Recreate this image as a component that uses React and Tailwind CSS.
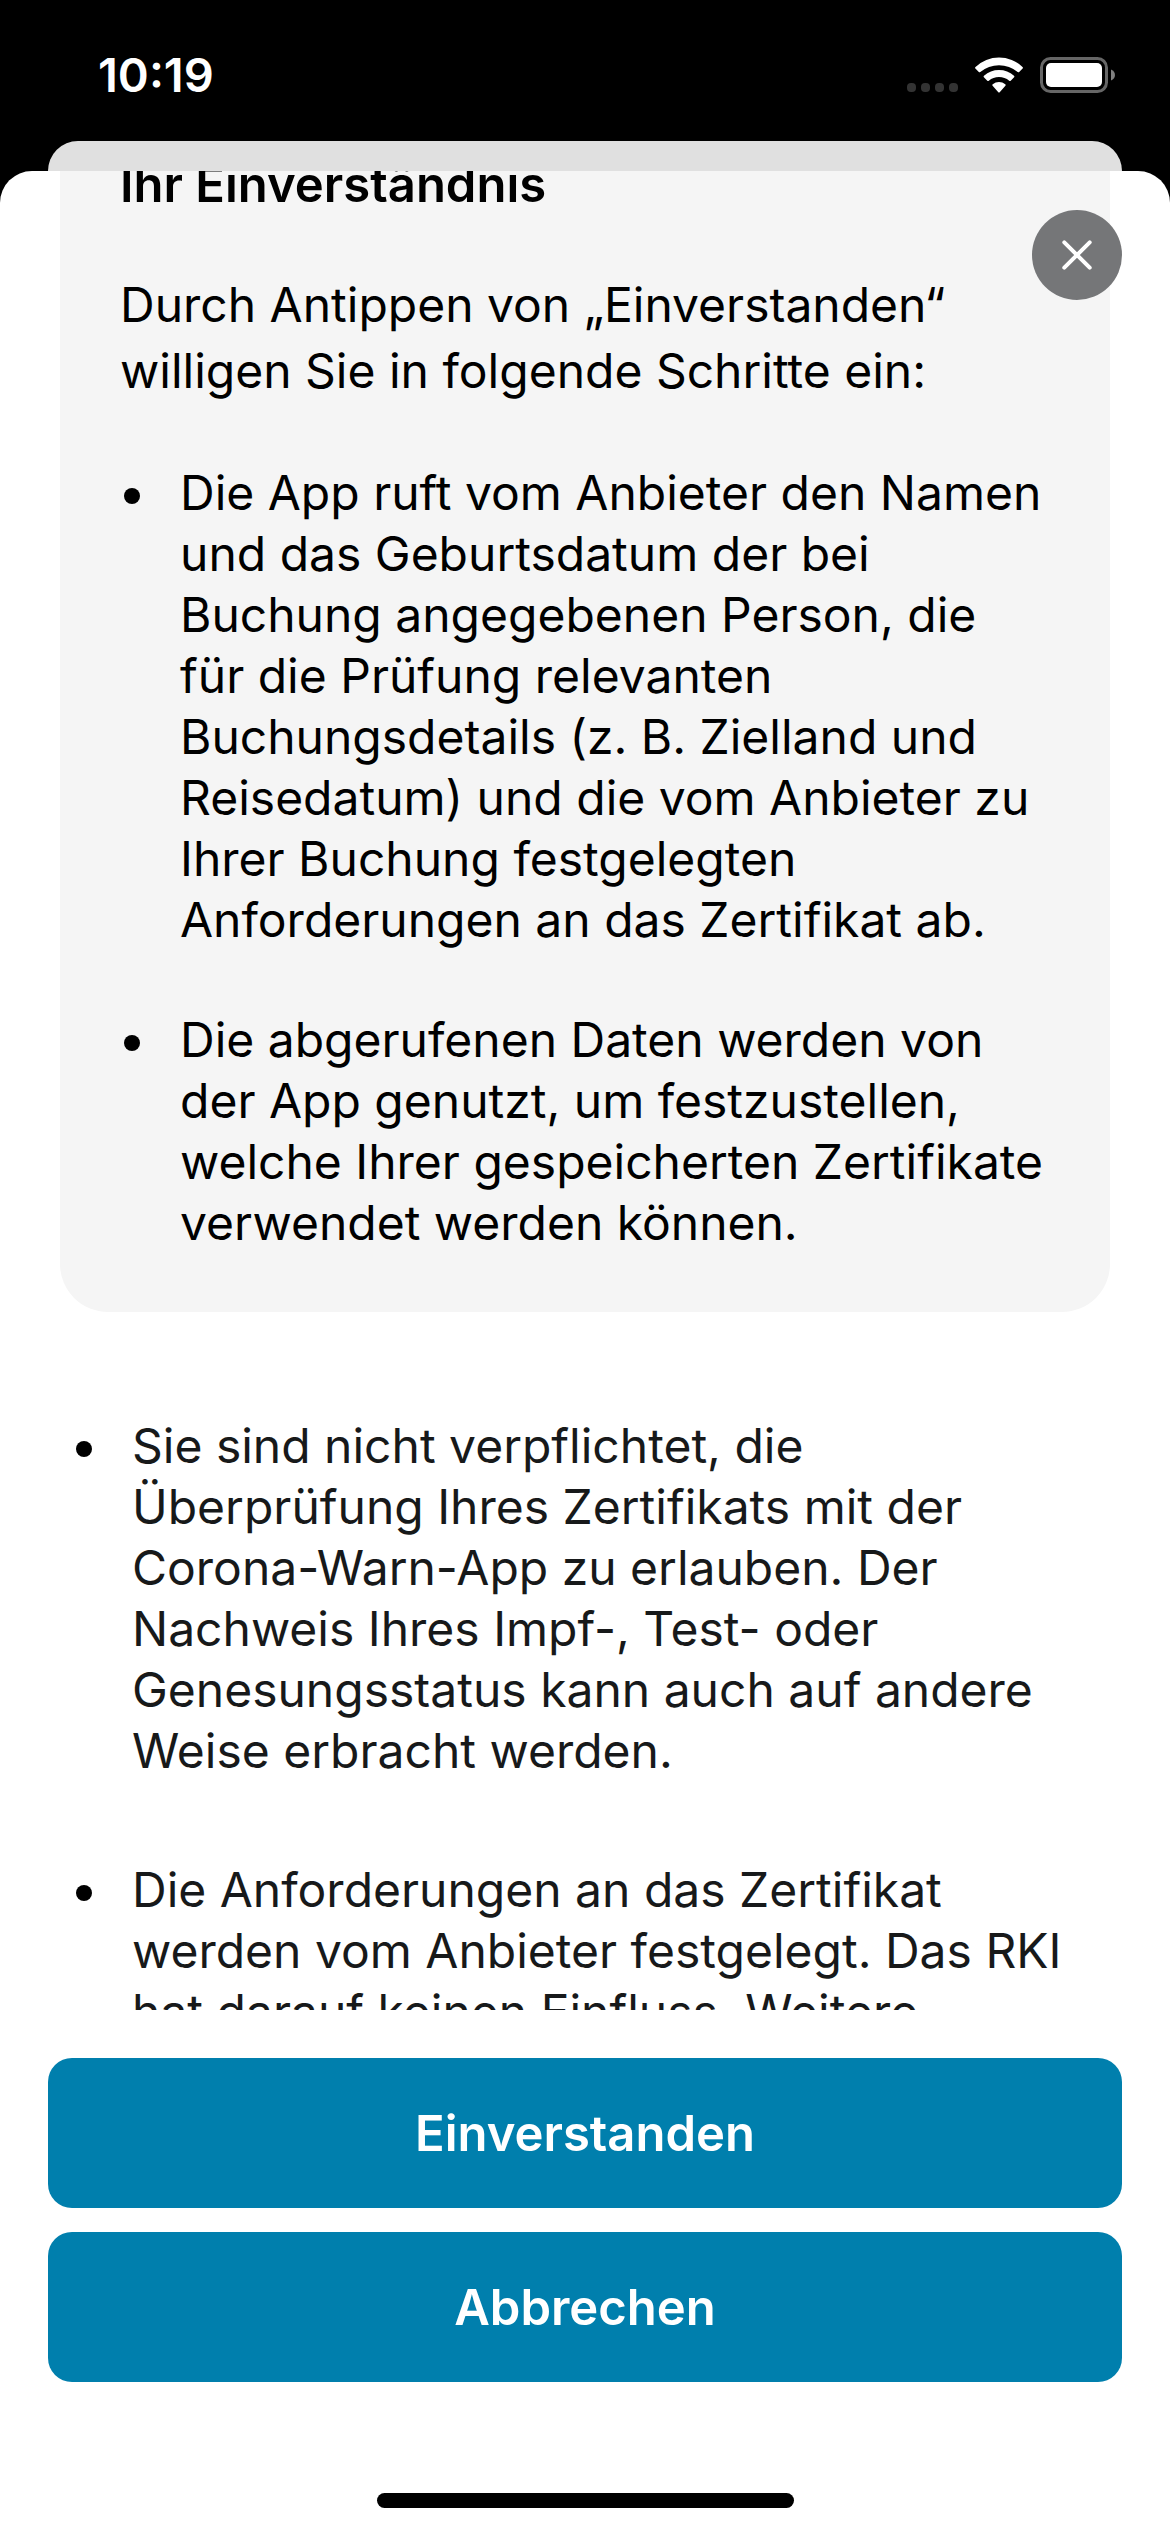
function StatusBar() {
  return (
    <header className="flex h-[141px] shrink-0 items-center justify-between pt-2 pr-[55px] pl-[98px] text-white">
      <time className="text-[47px] leading-[54px] font-semibold">10:19</time>
      <div className="flex h-9 items-end">
        <div className="mr-[17px] mb-px flex gap-[5px]">
          {[0, 1, 2, 3].map((dot) => (
            <span key={dot} className="size-[9px] rounded-[4px] bg-[#333333]" />
          ))}
        </div>
        <svg viewBox="0 0 48 36" className="mr-[17px] h-9 w-12" fill="currentColor" aria-hidden="true">
          <path d="M.5 9.9A34 34 0 0 1 47.5 9.9Q48.4 10.7 47.6 11.5L44.2 15Q43.5 15.7 42.7 15A29 29 0 0 0 5.3 15Q4.5 15.7 3.8 15L.4 11.5Q-.4 10.7.5 9.9Z" />
          <path d="M9 18.7A22.5 22.5 0 0 1 39 18.7Q39.9 19.4 39.1 20.2L35.7 23.7Q35 24.4 34.2 23.8A15.8 15.8 0 0 0 13.8 23.8Q13 24.4 12.3 23.7L8.9 20.2Q8.1 19.4 9 18.7Z" />
          <path d="M17.7 27.2A10.5 10.5 0 0 1 30.3 27.2Q31.2 28 30.4 28.8L24.7 35.2Q24 35.9 23.3 35.2L17.6 28.8Q16.8 28 17.7 27.2Z" />
        </svg>
        <svg viewBox="0 0 75 36" className="h-9 w-[75px]" aria-hidden="true">
          <rect x="1.5" y="1.5" width="65" height="33" rx="9" fill="none" stroke="#666666" strokeWidth="3" />
          <rect x="6" y="6" width="56" height="24" rx="5" fill="white" />
          <path d="M71 12.5C76.3 14.5 76.3 21.5 71 23.5Z" fill="#808080" />
        </svg>
      </div>
    </header>
  );
}

function Bullet({ lines }) {
  return (
    <li className="relative pl-[60px]">
      <span className="absolute top-[26px] left-1 size-4 rounded-full bg-black" />
      {lines.map((line) => (
        <span key={line} className="block whitespace-nowrap">
          {line}{" "}
        </span>
      ))}
    </li>
  );
}

const consentSteps = [
  [
    "Die App ruft vom Anbieter den Namen",
    "und das Geburtsdatum der bei",
    "Buchung angegebenen Person, die",
    "für die Prüfung relevanten",
    "Buchungsdetails (z. B. Zielland und",
    "Reisedatum) und die vom Anbieter zu",
    "Ihrer Buchung festgelegten",
    "Anforderungen an das Zertifikat ab.",
  ],
  [
    "Die abgerufenen Daten werden von",
    "der App genutzt, um festzustellen,",
    "welche Ihrer gespeicherten Zertifikate",
    "verwendet werden können.",
  ],
];

const notes = [
  [
    "Sie sind nicht verpflichtet, die",
    "Überprüfung Ihres Zertifikats mit der",
    "Corona-Warn-App zu erlauben. Der",
    "Nachweis Ihres Impf-, Test- oder",
    "Genesungsstatus kann auch auf andere",
    "Weise erbracht werden.",
  ],
  [
    "Die Anforderungen an das Zertifikat",
    "werden vom Anbieter festgelegt. Das RKI",
    "hat darauf keinen Einfluss. Weitere",
  ],
];

function ActionButton({ children }) {
  return (
    <button
      type="button"
      className="h-[150px] w-full rounded-3xl bg-[#007fad] text-[49px] leading-[61px] font-semibold text-white"
    >
      {children}
    </button>
  );
}

export default function App() {
  return (
    <div className="flex h-screen flex-col overflow-hidden bg-black font-['Inter',sans-serif]">
      <StatusBar />
      <div className="mx-12 h-[30px] shrink-0 rounded-t-[30px] bg-[#e0e0e0]" />
      <main className="relative flex min-h-0 flex-1 flex-col overflow-hidden rounded-t-[32px] bg-white">
        <div className="min-h-0 flex-1 overflow-hidden text-[48px] leading-[61px]">
          <section className="mx-[60px] -mt-[77px] rounded-[48px] bg-[#f5f5f5] px-[60px] pt-[60px] pb-[59px] text-black">
            <h1 className="text-[49px] leading-[61px] font-semibold">Ihr Einverständnis</h1>
            <p className="mt-[57px] leading-[66px]">
              Durch Antippen von „Einverstanden“
              <br />
              willigen Sie in folgende Schritte ein:
            </p>
            <ul className="mt-[58px] flex flex-col gap-[59px]">
              {consentSteps.map((lines) => (
                <Bullet key={lines[0]} lines={lines} />
              ))}
            </ul>
          </section>
          <ul className="mx-[72px] mt-[103px] flex flex-col gap-[78px] text-[#17191a]">
            {notes.map((lines) => (
              <Bullet key={lines[0]} lines={lines} />
            ))}
          </ul>
        </div>
        <footer className="flex shrink-0 flex-col gap-6 px-12 pt-12 pb-6">
          <ActionButton>Einverstanden</ActionButton>
          <ActionButton>Abbrechen</ActionButton>
          <div className="mx-auto mt-[87px] h-[15px] w-[417px] rounded-full bg-black" />
        </footer>
        <button
          type="button"
          aria-label="Schließen"
          className="absolute top-[39px] right-12 flex size-[90px] items-center justify-center rounded-full bg-[#757678] text-white"
        >
          <svg viewBox="0 0 30 30" className="size-[30px]" fill="none" stroke="currentColor" strokeWidth="4" strokeLinecap="round" aria-hidden="true">
            <path d="M2.3 2.3 27.7 27.7M27.7 2.3 2.3 27.7" />
          </svg>
        </button>
      </main>
    </div>
  );
}
